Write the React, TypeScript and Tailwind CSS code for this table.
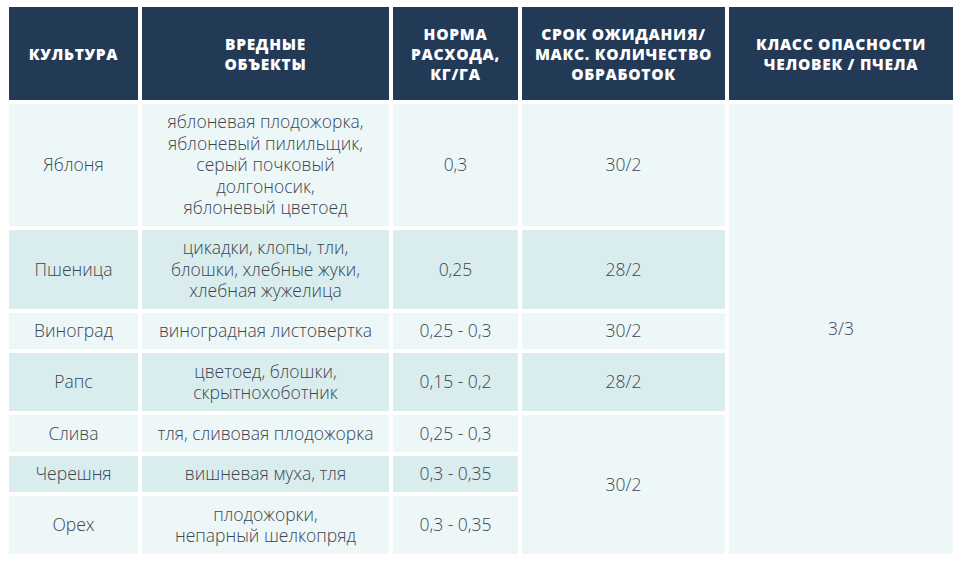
import React from 'react';

type Row = {
  crop: string;
  pests: string[];
  rate: string;
  wait?: { text: string; span?: number };
  h: string;
  dark: boolean;
};

const rows: Row[] = [
  {
    crop: 'Яблоня',
    pests: ['яблоневая плодожорка,', 'яблоневый пилильщик,', 'серый почковый', 'долгоносик,', 'яблоневый цветоед'],
    rate: '0,3',
    wait: { text: '30/2' },
    h: 'h-[122px]',
    dark: false,
  },
  {
    crop: 'Пшеница',
    pests: ['цикадки, клопы, тли,', 'блошки, хлебные жуки,', 'хлебная жужелица'],
    rate: '0,25',
    wait: { text: '28/2' },
    h: 'h-[79px]',
    dark: true,
  },
  {
    crop: 'Виноград',
    pests: ['виноградная листовертка'],
    rate: '0,25 - 0,3',
    wait: { text: '30/2' },
    h: 'h-[36px]',
    dark: false,
  },
  {
    crop: 'Рапс',
    pests: ['цветоед, блошки,', 'скрытнохоботник'],
    rate: '0,15 - 0,2',
    wait: { text: '28/2' },
    h: 'h-[58px]',
    dark: true,
  },
  {
    crop: 'Слива',
    pests: ['тля, сливовая плодожорка'],
    rate: '0,25 - 0,3',
    wait: { text: '30/2', span: 3 },
    h: 'h-[37px]',
    dark: false,
  },
  {
    crop: 'Черешня',
    pests: ['вишневая муха, тля'],
    rate: '0,3 - 0,35',
    h: 'h-[36px]',
    dark: true,
  },
  {
    crop: 'Орех',
    pests: ['плодожорки,', 'непарный шелкопряд'],
    rate: '0,3 - 0,35',
    h: 'h-[58px]',
    dark: false,
  },
];

const headers = [
  ['КУЛЬТУРА'],
  ['ВРЕДНЫЕ', 'ОБЪЕКТЫ'],
  ['НОРМА', 'РАСХОДА,', 'КГ/ГА'],
  ['СРОК ОЖИДАНИЯ/', 'МАКС. КОЛИЧЕСТВО', 'ОБРАБОТОК'],
  ['КЛАСС ОПАСНОСТИ', 'ЧЕЛОВЕК / ПЧЕЛА'],
];

export default function App() {
  return (
    <div className="w-[959px] h-[568px] bg-white pl-[5px] pt-[3px] overflow-hidden font-['Open_Sans',sans-serif]">
      <table className="table-fixed border-separate border-spacing-[4px] w-[952px] text-center">
        <colgroup>
          <col className="w-[129px]" />
          <col className="w-[247px]" />
          <col className="w-[125px]" />
          <col className="w-[203px]" />
          <col className="w-[224px]" />
        </colgroup>
        <thead>
          <tr className="h-[93px]">
            {headers.map((lines, i) => (
              <th
                key={i}
                className="bg-[#233a57] p-0 align-middle text-white text-[15.5px] font-extrabold leading-[20px] tracking-[0.7px] whitespace-nowrap"
              >
                {lines.map((l) => (
                  <div key={l}>{l}</div>
                ))}
              </th>
            ))}
          </tr>
        </thead>
        <tbody className="text-[#3b4550] text-[17.5px] leading-[21.5px] font-light">
          {rows.map((r, i) => {
            const bg = r.dark ? 'bg-[#d9edef]' : 'bg-[#edf7f8]';
            return (
              <tr key={r.crop} className={r.h}>
                <td className={`${bg} p-0 align-middle`}>{r.crop}</td>
                <td className={`${bg} p-0 align-middle whitespace-nowrap`}>
                  {r.pests.map((p) => (
                    <div key={p}>{p}</div>
                  ))}
                </td>
                <td className={`${bg} p-0 align-middle`}>{r.rate}</td>
                {r.wait && (
                  <td
                    rowSpan={r.wait.span ?? 1}
                    className={`${r.wait.span ? 'bg-[#edf7f8]' : bg} p-0 align-middle`}
                  >
                    {r.wait.text}
                  </td>
                )}
                {i === 0 && (
                  <td rowSpan={7} className="bg-[#edf7f8] p-0 align-middle">
                    3/3
                  </td>
                )}
              </tr>
            );
          })}
        </tbody>
      </table>
    </div>
  );
}
